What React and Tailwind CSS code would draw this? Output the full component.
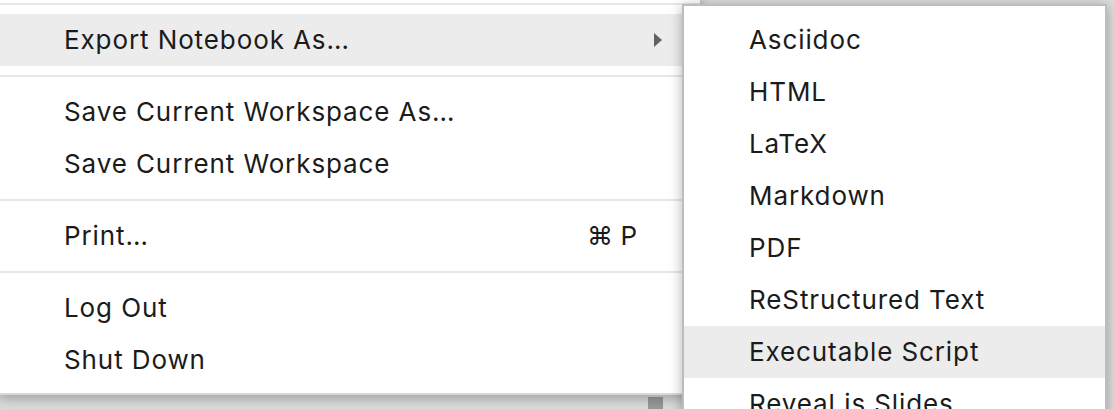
import React from 'react'

const font = { fontFamily: 'Inter, "Liberation Sans", sans-serif' }

const mainItems = [
  { sep: true },
  { label: 'Export Notebook As…', active: true, submenu: true },
  { sep: true },
  { label: 'Save Current Workspace As…' },
  { label: 'Save Current Workspace' },
  { sep: true },
  { label: 'Print…', shortcut: '⌘ P' },
  { sep: true },
  { label: 'Log Out' },
  { label: 'Shut Down' },
]

const exportItems = [
  'Asciidoc',
  'HTML',
  'LaTeX',
  'Markdown',
  'PDF',
  'ReStructured Text',
  'Executable Script',
  'Reveal.js Slides',
]

function Separator() {
  return (
    <div className="py-[9px]">
      <div className="h-[2px] bg-[#e6e6e6]" />
    </div>
  )
}

function Caret() {
  return (
    <svg width="8" height="14" viewBox="0 0 8 14">
      <polygon points="0,0 8,7 0,14" fill="#616161" />
    </svg>
  )
}

export default function App() {
  return (
    <div className="relative w-[1114px] h-[409px] overflow-hidden bg-[#dddddd] text-[26px] text-[#1b1b1b]" style={font}>
      {/* something in the page behind the menus */}
      <div className="absolute left-[648px] top-[397px] w-[15px] h-[20px] bg-[#9a9a9a]" />

      {/* main menu */}
      <div className="absolute left-[-2px] top-[-6px] w-[702px] bg-white pb-[7px] border-b-2 border-[#d8d8d8] shadow-[0_4px_12px_rgba(0,0,0,0.28)]">
        {mainItems.map((item, i) =>
          item.sep ? (
            <Separator key={i} />
          ) : (
            <div
              key={i}
              className={`flex items-center h-[52px] pl-[66px] pr-[21px] ${item.active ? 'bg-[#ececec]' : ''}`}
            >
              <span className="flex-1 leading-none tracking-[0.9px]">{item.label}</span>
              <span className="leading-none">{item.shortcut}</span>
              <span className="w-[42px] flex justify-center">{item.submenu && <Caret />}</span>
            </div>
          )
        )}
      </div>

      {/* Export submenu */}
      <div className="absolute left-[682px] top-[4px] w-[425px] bg-white border-2 border-[#bdbdbd] pt-[8px] shadow-[0_2px_12px_rgba(0,0,0,0.3)]">
        {exportItems.map(label => (
          <div
            key={label}
            className={`flex items-center h-[52px] pl-[65px] ${label === 'Executable Script' ? 'bg-[#ececec]' : ''}`}
          >
            <span className="leading-none tracking-[0.9px]">{label}</span>
          </div>
        ))}
      </div>
    </div>
  )
}
